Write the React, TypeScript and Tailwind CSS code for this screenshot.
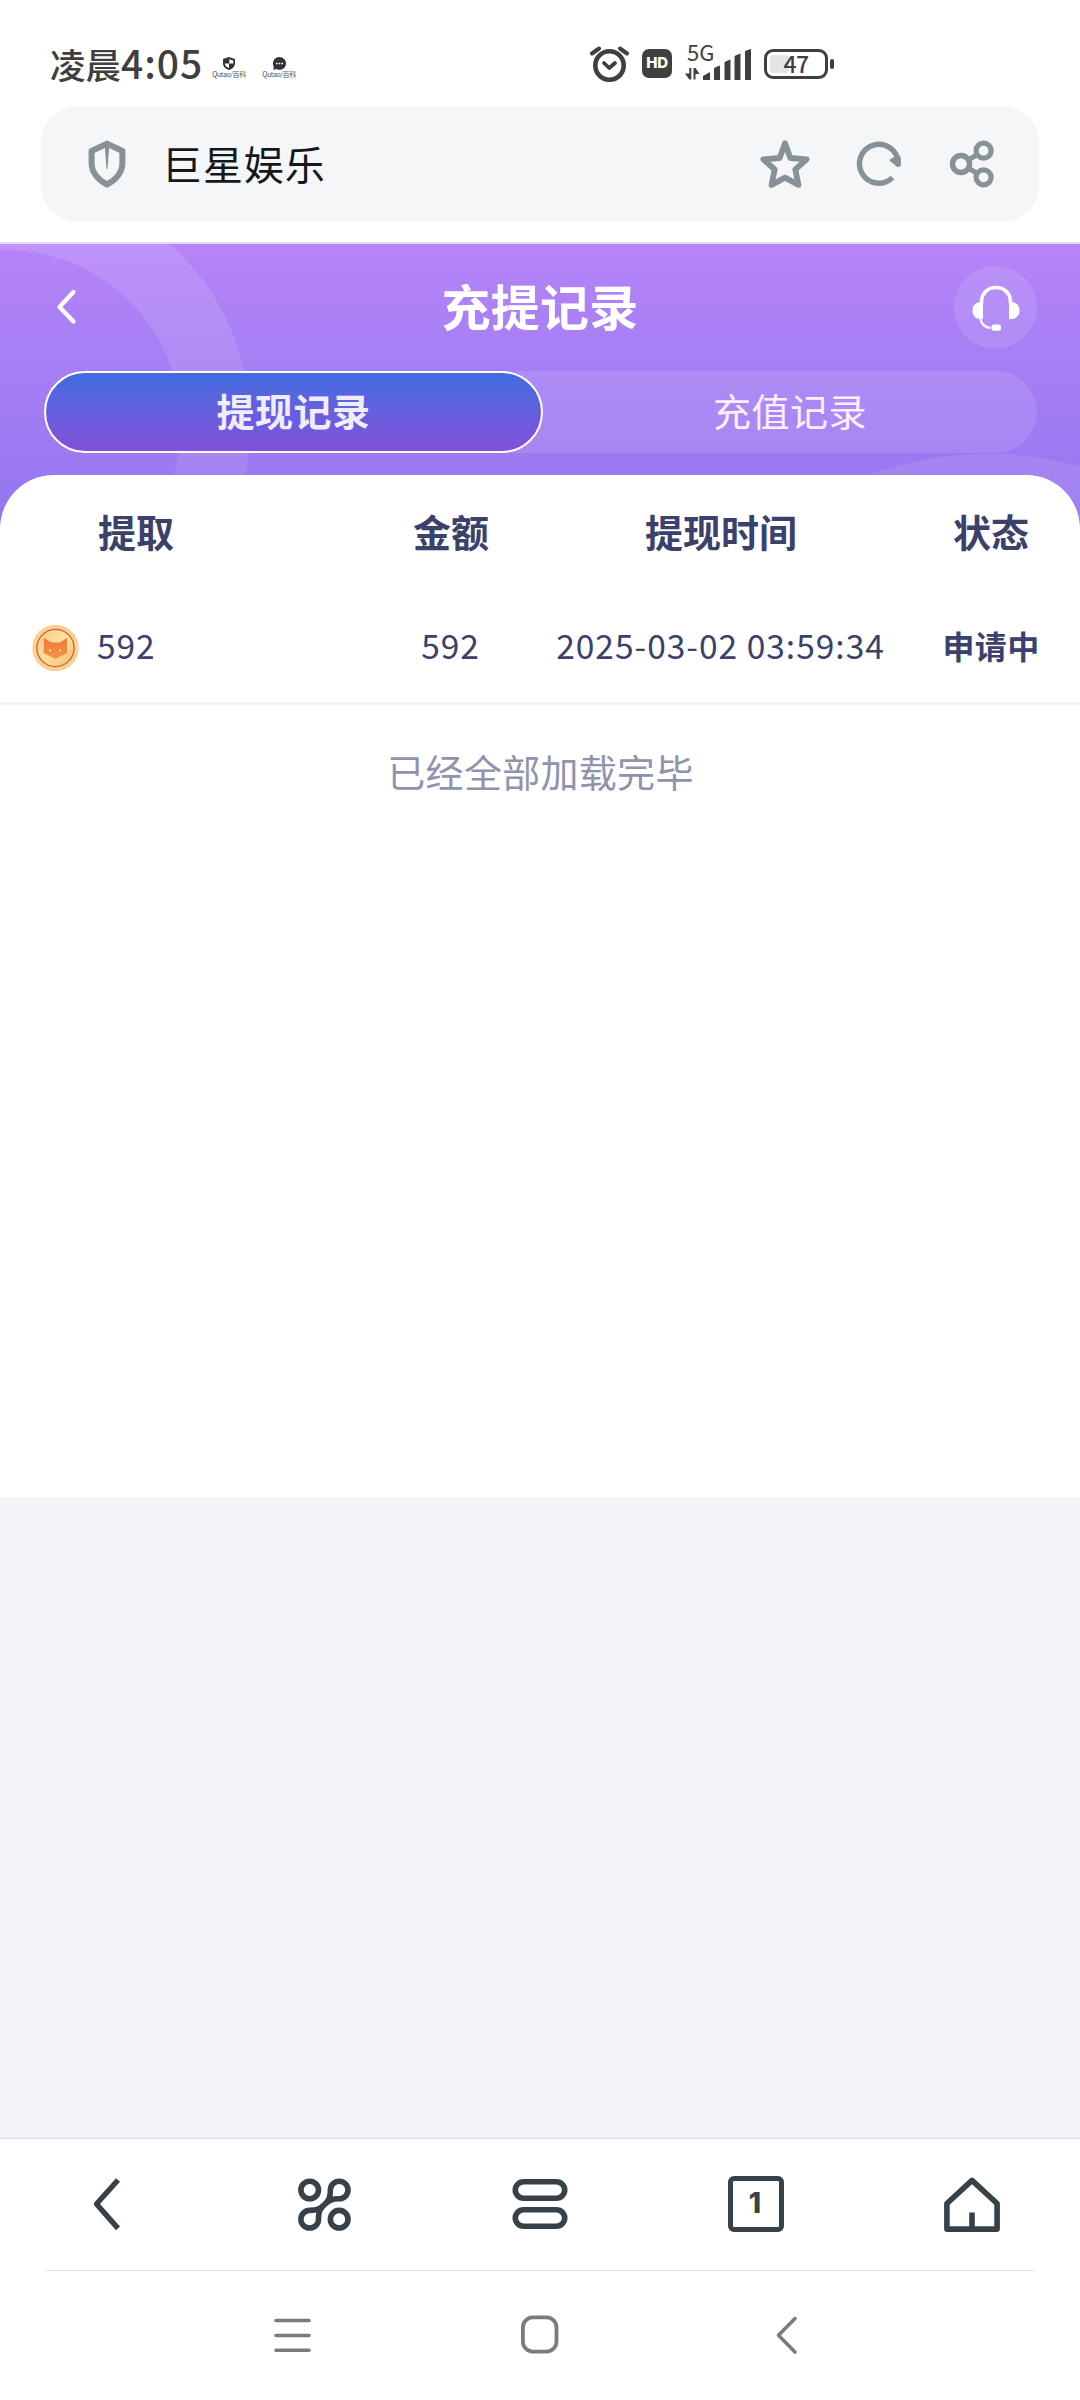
import React, { useState } from 'react';
import clsx from 'clsx';

interface WithdrawRecord {
  id: number;
  token: string;
  amount: string;
  time: string;
  status: string;
}

type TabKey = 'withdraw' | 'deposit';

const TABS: { key: TabKey; label: string }[] = [
  { key: 'withdraw', label: '提现记录' },
  { key: 'deposit', label: '充值记录' },
];

const COLUMNS = ['提取', '金额', '提现时间', '状态'];

const RECORDS: WithdrawRecord[] = [
  { id: 1, token: '592', amount: '592', time: '2025-03-02 03:59:34', status: '申请中' },
];

/**
 * Phone status bar: clock and notifications left, system icons right
 */
const StatusBar: React.FC = () => (
  <div className="flex h-[106px] shrink-0 items-start pl-[50px] text-[#3f3f3f]">
    <div className="mt-[35px] w-[153px] whitespace-nowrap text-[35.5px] font-medium leading-[54px]">
      凌晨<span className="text-[39px] tracking-[1px]">4:05</span>
    </div>
    <div className="ml-[9px] mt-[57px] flex w-[34px] flex-col items-center">
      <svg width="12" height="13" viewBox="0 0 12 13">
        <path d="M6 0l6 2v4.500c0 3-2.500 5.300-6 6.500C2.500 11.800 0 9.500 0 6.500V2z" fill="#333" />
        <path d="M6.300 2.200l4 1.300v3h-4zM1.800 6.500h4.200v4.600C3.600 10 2 8.500 1.800 6.500z" fill="#fff" />
      </svg>
      <span className="whitespace-nowrap text-[7px] leading-[8px] tracking-[-0.4px] text-[#555]">Qutao/百科</span>
    </div>
    <div className="ml-4 mt-[57px] flex w-[34px] flex-col items-center">
      <svg width="13" height="13" viewBox="0 0 13 13">
        <path d="M6.500 0a6.400 6.400 0 1 1-3 12L.4 12.900l.3-3.500A6.400 6.400 0 0 1 6.500 0z" fill="#333" />
        <path d="M3 6.500h1.600M5.700 6.500h1.600M8.400 6.500H10" stroke="#fff" strokeWidth="1.600" />
      </svg>
      <span className="whitespace-nowrap text-[7px] leading-[8px] tracking-[-0.4px] text-[#555]">Qutao/百科</span>
    </div>

    <svg className="ml-[293px] mt-[45px]" width="40" height="38" viewBox="0 0 40 38" fill="none" stroke="#3f3f3f">
      <circle cx="20.500" cy="20.500" r="14.200" strokeWidth="4.600" />
      <path d="M15 18l5.200 5 5.800-5" strokeWidth="3.800" strokeLinecap="round" strokeLinejoin="round" />
      <path d="M3 8.500l7-5M38 8.500l-7-5" strokeWidth="4" strokeLinecap="round" />
    </svg>
    <div className="ml-[13px] mt-[49px] flex h-[29px] w-[30px] items-center justify-center rounded-[7px] bg-[#3f3f3f] font-['Inter'] text-[15px] font-extrabold tracking-[-0.2px] text-white">
      HD
    </div>
    <div className="ml-[13px] mt-[42px] w-[67px]">
      <div className="pl-[2px] text-[22px] leading-[18px]">5G</div>
      <svg className="-mt-[11px]" width="67" height="32" viewBox="0 0 67 32" fill="#3f3f3f">
        <path d="M4.300 19h2v11.500h-2L0 24.500h4.300zM8.500 30.500V19h2l4 6h-4v5.500z" />
        <path d="M18 31v-4l7-4v8zM29 31V20q0-1 1-1.400l5-2.200V31zM39.500 31V14q0-1 1-1.400l5-2.200V31zM49.500 31V8q0-1 1-1.400l5-2.200V31zM60 31V3q0-1 1-1.400L66 0v31z" />
      </svg>
    </div>
    <div className="ml-3 mt-[49px] flex items-center gap-[2px]">
      <div className="relative flex h-[30px] w-[64px] items-center justify-center rounded-[9px] border-[3px] border-[#3f3f3f]">
        <div className="absolute left-[3px] top-[3px] h-[18px] w-[19px] rounded-[4px] bg-[#e4e4e4]" />
        <span className="relative pb-[2px] text-[23px] font-medium leading-none tracking-[-0.5px]">47</span>
      </div>
      <div className="h-[10px] w-[4px] rounded-[2px] bg-[#3f3f3f]" />
    </div>
  </div>
);

const AddressBar: React.FC = () => (
  <div className="mx-[41px] flex h-[116px] shrink-0 items-center rounded-[36px] bg-[#f4f6f8] pl-[47px] pr-[44px]">
    <svg width="38" height="48" viewBox="0 0 38 48" fill="none">
      <path
        d="M19 3.600L34.400 11v12c0 9.500-6.900 17.500-15.400 21.400C10.500 40.500 3.600 32.500 3.600 23V11z"
        stroke="#879298"
        strokeWidth="6"
        strokeLinejoin="round"
      />
      <path d="M16.700 5h4.600L19.500 29h-1z" fill="#879298" />
    </svg>
    <span className="ml-[36px] pb-[3px] text-[40px] leading-[56px] tracking-[0.9px] text-[#15181b]">巨星娱乐</span>
    <div className="ml-auto flex items-center">
      <svg width="52" height="50" viewBox="0 0 52 50" fill="none">
        <path
          d="M26 4.300L31.300 19 47.600 20.300 36.300 30.500 39.500 46 26 38.600 12.500 46 15.700 30.500 4.400 20.300 20.700 19z"
          stroke="#879298"
          strokeWidth="5.800"
          strokeLinejoin="round"
        />
      </svg>
      <svg className="ml-[45px]" width="46" height="46" viewBox="0 0 46 46" fill="none">
        <path d="M36.500 36.600A19.400 19.400 0 1 1 42.300 22" stroke="#879298" strokeWidth="5.400" />
        <path d="M39 15.500h5.500l.5 5v3.500q-1.400 3-4.500 1.500l-6.500-5.500q-1-1 .2-1.800z" fill="#879298" />
      </svg>
      <svg className="ml-[47px]" width="46" height="48" viewBox="0 0 46 48" fill="none" stroke="#879298">
        <circle cx="12" cy="24" r="8.500" strokeWidth="5.400" />
        <circle cx="34.600" cy="10.700" r="7.500" strokeWidth="5.200" />
        <circle cx="34.600" cy="37.300" r="7.500" strokeWidth="5.200" />
        <path d="M19.500 19.800l8-4.800M19.500 28.200l8 4.800" strokeWidth="5" />
      </svg>
    </div>
  </div>
);

const HeaderBackdrop: React.FC = () => (
  <svg className="absolute inset-0" width="1080" height="300" viewBox="0 0 1080 300" fill="none">
    <defs>
      <linearGradient id="ring" x1="0" y1="0" x2="0" y2="240" gradientUnits="userSpaceOnUse">
        <stop stopColor="#fff" stopOpacity=".12" />
        <stop offset="1" stopColor="#fff" stopOpacity=".09" />
      </linearGradient>
    </defs>
    <circle cx="6" cy="181" r="209.700" stroke="url(#ring)" strokeWidth="69.500" />
    <circle cx="988" cy="562" r="322" stroke="#fff" strokeOpacity=".09" strokeWidth="60" />
  </svg>
);

const CoinIcon: React.FC = () => (
  <svg width="47" height="48" viewBox="0 0 47 48">
    <defs>
      <linearGradient id="coin" x1="0" y1="0" x2="1" y2="1">
        <stop stopColor="#fbc57e" />
        <stop offset=".5" stopColor="#fee0a2" />
        <stop offset="1" stopColor="#fbb968" />
      </linearGradient>
      <linearGradient id="fox" x1="0" y1="0" x2="0" y2="1">
        <stop stopColor="#ee7a33" />
        <stop offset="1" stopColor="#f5924a" />
      </linearGradient>
    </defs>
    <circle cx="23.500" cy="24" r="23.200" fill="#fcd092" />
    <circle cx="23.500" cy="24" r="18.600" fill="url(#coin)" stroke="#bd6a35" strokeWidth="1.300" />
    <path d="M12 14l7 4.500h9L35 14v15l-11.500 6L11.500 29z" fill="url(#fox)" />
    <circle cx="18" cy="26.500" r="1.100" fill="#fff0c8" />
    <circle cx="28" cy="26.500" r="1.100" fill="#fff0c8" />
  </svg>
);

const BrowserNav: React.FC = () => (
  <div className="grid h-[132px] shrink-0 grid-cols-5 items-center justify-items-center border-t border-[#dcdde0] bg-white pb-px">
    <svg width="56" height="56" viewBox="0 0 56 56" fill="none" stroke="#374148" strokeWidth="5.400">
      <path d="M38 4L16.500 28 38 52.400" strokeLinejoin="round" />
    </svg>
    <svg width="53" height="53" viewBox="0 0 53 53" fill="none" stroke="#374148" strokeWidth="5.600">
      <circle cx="11.700" cy="12" r="8.800" />
      <circle cx="41.200" cy="41.200" r="8.800" />
      <path d="M41.200 20.800a8.800 8.800 0 1 0-8.800-8.800C32.400 19.500 31 22 26.500 26.600 22 31 20.500 33 20.500 41.200a8.800 8.800 0 1 1-8.800-8.800C19 32.400 22 31 26.500 26.600S34 20.800 41.200 20.800z" />
    </svg>
    <svg width="56" height="50" viewBox="0 0 56 50" fill="none" stroke="#374148" strokeWidth="5.600">
      <rect x="3.300" y="2.800" width="49.400" height="16.400" rx="8.200" />
      <rect x="3.300" y="30.800" width="49.400" height="16.400" rx="8.200" />
    </svg>
    <div className="flex h-[56px] w-[56px] items-center justify-center rounded-[6px] border-[5.500px] border-[#374148] pb-[3px] pr-[2px] font-['Inter'] text-[28px] font-extrabold leading-none text-[#374148]">
      1
    </div>
    <svg width="56" height="56" viewBox="0 0 56 56" fill="none" stroke="#374148" strokeWidth="5.600" strokeLinejoin="round">
      <path d="M2.900 53.100V27.500L28 4.400l25.100 23.100v25.600z" />
      <path d="M28 36.500V53" />
    </svg>
  </div>
);

const SystemNav: React.FC = () => (
  <div className="flex h-[130px] shrink-0 items-start bg-white">
    <div className="mx-auto flex h-full w-[990px] items-start border-t border-[#e2e2e2] pl-[228px] pt-[44px]">
      <svg width="40" height="40" viewBox="0 0 40 40" stroke="#7b7b7b" strokeWidth="3.600" strokeLinecap="round">
        <path d="M3 5.500h33M3 20.500h33M3 35.300h33" />
      </svg>
      <svg className="ml-[208px]" width="40" height="40" viewBox="0 0 40 40" fill="none">
        <rect x="1.900" y="2.400" width="33.600" height="34.200" rx="10" stroke="#7b7b7b" strokeWidth="3.800" />
      </svg>
      <svg className="ml-[206px]" width="40" height="40" viewBox="0 0 40 40" fill="none">
        <path d="M28 3.500L11.500 20.300 28 37" stroke="#7b7b7b" strokeWidth="3.600" strokeLinecap="round" strokeLinejoin="round" />
      </svg>
    </div>
  </div>
);

const App: React.FC = () => {
  const [activeTab, setActiveTab] = useState<TabKey>('withdraw');

  return (
    <div className="flex h-[2400px] w-[1080px] flex-col overflow-hidden bg-white font-['Noto_Sans_CJK_SC',sans-serif]">
      <StatusBar />
      <AddressBar />

      <main className="mt-5 flex min-h-0 flex-1 flex-col bg-[#f5f4fb]">
        {/* Purple header with the record tabs */}
        <header className="relative h-[288px] shrink-0 border-t-2 border-[#e6dcf5] bg-linear-to-b from-[#b584f8] to-[#9376ef]">
          <HeaderBackdrop />
          <div className="relative grid h-[127px] grid-cols-[1fr_auto_1fr] items-center pl-[55px] pr-[43px]">
            <svg className="-mt-[2px]" width="22" height="36" viewBox="0 0 22 36" fill="none">
              <path d="M18.500 3L4.500 18l14 14.500" stroke="#fff" strokeWidth="4.200" strokeLinecap="round" strokeLinejoin="round" />
            </svg>
            <h1 className="mr-[12px] pb-[6px] text-[49px] font-bold leading-[60px] tracking-[0.3px] text-white">充提记录</h1>
            <div className="flex h-[83px] w-[83px] items-center justify-center justify-self-end rounded-full bg-white/10">
              <svg width="48" height="46" viewBox="0 0 48 46" fill="none">
                <path d="M9.500 19v-2C9.500 8 16 2.500 24 2.500S38.500 8 38.500 17v2" stroke="#fff" strokeWidth="3.600" />
                <path d="M11 17v17H8.500C4 34 .5 30.500.5 25.500S4 17 8.500 17zM37 17v17h2.500c4.500 0 8-3.500 8-8.500S44 17 39.500 17z" fill="#fff" />
                <path d="M8.500 34c1 5.500 4.500 8.500 10 8.800" stroke="#fff" strokeWidth="2.200" />
                <rect x="19.500" y="39.500" width="9.500" height="6.200" rx="2.500" fill="#fff" />
              </svg>
            </div>
          </div>
          <div className="relative ml-[44px] mr-[43px] flex h-[82px] rounded-full bg-white/10">
            {TABS.map((tab) => (
              <button
                key={tab.key}
                onClick={() => setActiveTab(tab.key)}
                className={clsx(
                  'rounded-full pb-[5px] text-[38px] leading-none tracking-[0.5px]',
                  activeTab === tab.key
                    ? 'w-[499px] border-2 border-white bg-linear-to-b from-[#3e6ce0] to-[#8150db] font-bold text-[#efecfd]'
                    : 'flex-1 text-[#fbeffd]'
                )}
              >
                {tab.label}
              </button>
            ))}
          </div>
        </header>

        {/* Records table */}
        <section className="relative -mt-[55px] h-[1022px] shrink-0 rounded-t-[54px] bg-white">
          <div className="grid h-[118px] grid-cols-[360px_180px_360px_180px] items-center pb-[7px] pl-px text-center text-[38px] font-bold text-[#3b416b]">
            {COLUMNS.map((column, index) => (
              <div key={column} className={clsx(index === 0 && 'pl-[97px] text-left')}>
                {column}
              </div>
            ))}
          </div>
          {RECORDS.map((record) => (
            <div
              key={record.id}
              className="grid h-[112px] grid-cols-[360px_180px_360px_180px] items-center border-b-[3px] border-[#f3f3f5] text-center text-[33.500px] text-[#3b416b]"
            >
              <div className="flex items-center gap-[18px] pl-8">
                <CoinIcon />
                <span className="pb-[4px] tracking-[0.9px]">{record.token}</span>
              </div>
              <div className="pb-[4px] pl-px tracking-[0.9px]">{record.amount}</div>
              <div className="whitespace-nowrap pb-[4px] pl-px tracking-[1px]">{record.time}</div>
              <div className="pb-[5px] pl-[2px] text-[32px] font-bold tracking-[0.4px]">{record.status}</div>
            </div>
          ))}
          <p className="pl-px pt-[38px] text-center text-[38px] leading-[56px] tracking-[0.300px] text-[#8f93ac]">已经全部加载完毕</p>
        </section>
      </main>

      <BrowserNav />
      <SystemNav />
    </div>
  );
};

export default App;
